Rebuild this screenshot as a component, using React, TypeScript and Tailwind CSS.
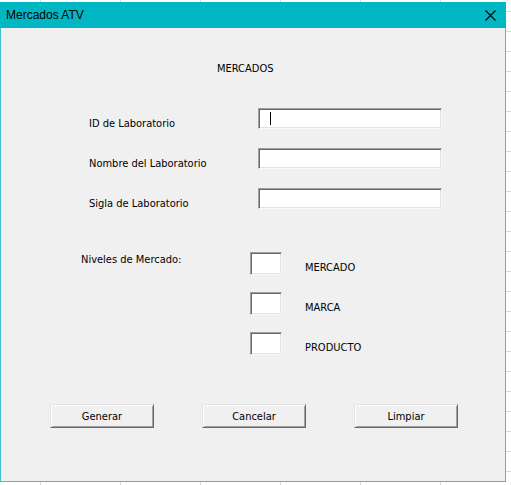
import React from "react";

const font = "font-['DejaVu_Sans_Condensed','Liberation_Sans',Arial,sans-serif]";

function Field({ label, cursor }: { label: string; cursor?: boolean }) {
  return (
    <div className="flex h-[21px] items-start">
      <div className="ml-[88px] w-[169px] pt-[9px] text-[11px] leading-[14px] text-black">{label}</div>
      <div className="relative h-[21px] w-[184px] border border-t-[#a0a0a0] border-l-[#a0a0a0] border-b-[#f8f8f8] border-r-[#f8f8f8] bg-white shadow-[inset_1px_1px_0_#696969,inset_-1px_-1px_0_#e3e3e3]">
        {cursor && <div className="ml-[11px] mt-[3px] h-[13px] w-px bg-black" />}
      </div>
    </div>
  );
}

function Level({ label }: { label: string }) {
  return (
    <div className="flex h-[23px] items-start">
      <div className="h-[23px] w-[32px] border border-t-[#a0a0a0] border-l-[#a0a0a0] border-b-[#f8f8f8] border-r-[#f8f8f8] bg-white shadow-[inset_1px_1px_0_#696969,inset_-1px_-1px_0_#e3e3e3]" />
      <div className="ml-[23px] pt-[9px] text-[11px] leading-[14px] text-black">{label}</div>
    </div>
  );
}

function Btn({ label }: { label: string }) {
  return (
    <div className="flex h-[24px] w-[104px] items-center justify-center border border-t-[#e3e3e3] border-l-[#e3e3e3] border-b-[#696969] border-r-[#696969] bg-[#f0f0f0] pt-[2px] text-[11px] leading-[14px] text-black shadow-[inset_1px_1px_0_#ffffff,inset_-1px_-1px_0_#a0a0a0]">
      {label}
    </div>
  );
}

export default function App() {
  return (
    <div
      className={`h-[485px] w-[511px] overflow-hidden bg-white bg-[linear-gradient(to_right,#d9d9d9_1px,transparent_1px),linear-gradient(to_bottom,#d9d9d9_1px,transparent_1px)] bg-[size:80px_20px] bg-[position:40px_11px] pt-[2px] ${font}`}
    >
      <div className="flex h-[480px] w-[506px] flex-col border-x border-b border-[#3cc3cc] bg-[#f0f0f0]">
        <div className="-mx-px flex h-[26px] shrink-0 items-center justify-between bg-[#00b7c3] pl-[6px] pr-[10px]">
          <span className="font-['Liberation_Sans',Arial,sans-serif] text-[12px] leading-[16px] text-black">Mercados ATV</span>
          <svg width="11" height="11" viewBox="0 0 11 11" className="mt-px">
            <path d="M0.5 0.5 L10.5 10.5 M10.5 0.5 L0.5 10.5" stroke="#000" strokeWidth="1.2" fill="none" />
          </svg>
        </div>

        <div className="flex flex-col">
          <div className="ml-[216px] mt-[34px] h-[14px] text-[11px] leading-[14px] text-black">MERCADOS</div>

          <div className="mt-[32px] flex flex-col gap-[19px]">
            <Field label="ID de Laboratorio" cursor />
            <Field label="Nombre del Laboratorio" />
            <Field label="Sigla de Laboratorio" />
          </div>

          <div className="mt-[43px] flex">
            <div className="ml-[80px] w-[169px] pt-px text-[11px] leading-[14px] text-black">Niveles de Mercado:</div>
            <div className="flex flex-col gap-[17px]">
              <Level label="MERCADO" />
              <Level label="MARCA" />
              <Level label="PRODUCTO" />
            </div>
          </div>

          <div className="ml-[49px] mt-[49px] flex gap-[48px]">
            <Btn label="Generar" />
            <Btn label="Cancelar" />
            <Btn label="Limpiar" />
          </div>
        </div>
      </div>
    </div>
  );
}
